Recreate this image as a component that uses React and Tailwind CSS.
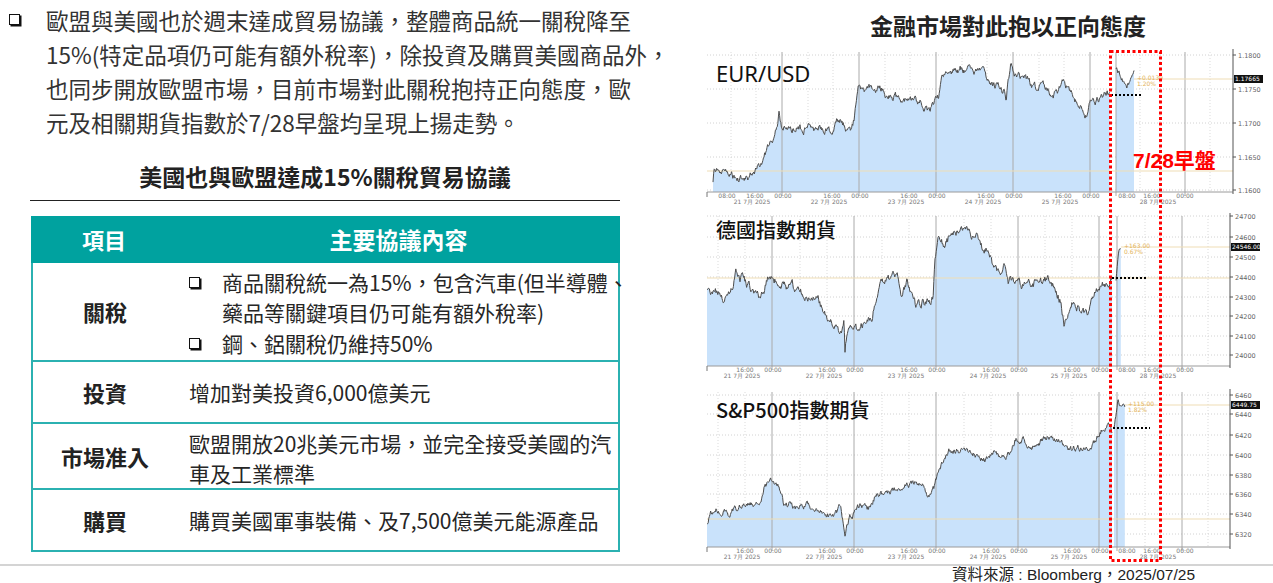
import React from 'react';

// seeded noise so the chart lines look the same on every render
function rng(seed) {
  let a = seed >>> 0;
  return () => {
    a = (a + 0x6d2b79f5) >>> 0;
    let t = a;
    t = Math.imul(t ^ (t >>> 15), t | 1);
    t ^= t + Math.imul(t ^ (t >>> 7), t | 61);
    return ((t ^ (t >>> 14)) >>> 0) / 4294967296;
  };
}

function walk(anchors, seed, amp) {
  const rnd = rng(seed);
  const pts = [];
  let r = 0;
  let j = 0;
  const x0 = anchors[0][0];
  const x1 = anchors[anchors.length - 1][0];
  for (let x = x0; x <= x1 + 0.001; x += 0.6) {
    while (j < anchors.length - 2 && x > anchors[j + 1][0]) j++;
    const [ax, ay] = anchors[j];
    const [bx, by] = anchors[j + 1];
    const t = bx === ax ? 0 : Math.min(1, Math.max(0, (x - ax) / (bx - ax)));
    r = r * 0.7 + (rnd() - 0.5) * amp;
    pts.push([x, ay + (by - ay) * t + r]);
  }
  return pts;
}

function seg(anchors, seed, amp, bottom) {
  const pts = walk(anchors, seed, amp);
  const line = pts.map((p, i) => (i ? 'L' : 'M') + p[0].toFixed(1) + ' ' + p[1].toFixed(1)).join(' ');
  const fill = line + ` L ${pts[pts.length - 1][0].toFixed(1)} ${bottom} L ${pts[0][0].toFixed(1)} ${bottom} Z`;
  return { line, fill };
}

const eurA = [[713,182],[714,168],[722,172],[730,173],[735,178],[745,180],[755,172],[764,157],[771,142],[776,130],[779,113],[782,127],[790,130],[810,128],[825,131],[832,132],[839,118],[845,125],[850,133],[854,120],[859,85],[865,90],[883,88],[887,97],[900,98],[920,103],[929,113],[934,105],[938,100],[942,80],[945,72],[964,70],[982,72],[993,85],[1004,90],[1006,100],[1008,82],[1011,63],[1015,75],[1026,78],[1033,90],[1044,85],[1052,97],[1064,83],[1070,92],[1081,108],[1086,117],[1090,103],[1096,103],[1107,92],[1110,95]];
const eurB = [[1116,70],[1118,72],[1122,80],[1127,84],[1130,81],[1133,78],[1134,74]];

const daxA = [[707,290],[718,293],[722,300],[727,297],[733,283],[736,273],[740,280],[744,278],[751,290],[760,298],[768,280],[771,277],[777,282],[788,288],[792,285],[806,297],[814,297],[817,292],[821,305],[826,315],[836,327],[841,335],[844,317],[845,353],[847,333],[854,333],[861,327],[872,315],[876,300],[879,288],[889,278],[898,277],[901,297],[907,283],[916,307],[923,302],[929,303],[933,295],[935,260],[938,237],[944,245],[953,232],[960,228],[967,232],[973,237],[975,232],[982,247],[989,250],[993,267],[999,273],[1004,265],[1008,283],[1015,280],[1022,285],[1033,283],[1039,280],[1048,280],[1055,288],[1061,303],[1064,323],[1072,300],[1081,313],[1088,315],[1094,297],[1099,288],[1107,282],[1112,278]];
const daxB = [[1116,280],[1118,260],[1119,250],[1121,247]];

const spxA = [[707,523],[711,513],[716,510],[729,513],[737,508],[744,502],[760,505],[764,488],[770,482],[777,483],[782,495],[784,510],[786,505],[799,507],[808,505],[814,513],[821,512],[826,517],[834,515],[841,507],[845,533],[850,518],[861,505],[870,508],[876,495],[890,493],[905,487],[916,482],[923,483],[927,498],[934,490],[938,473],[949,450],[956,450],[967,452],[986,460],[993,452],[1006,460],[1015,440],[1024,440],[1032,450],[1037,443],[1052,435],[1059,442],[1070,450],[1081,447],[1088,450],[1096,440],[1103,428],[1108,425],[1112,432]];
const spxB = [[1114,428],[1118,400],[1121,408],[1123,405],[1125,408]];

const days1 = [782, 859, 936, 1013, 1090];
const days2 = [772, 854, 936, 1018, 1099];

const charts = [
  {
    top: 48, h: 160, plotTop: 52, bottom: 192, axisX: 1233,
    ticks: [['1.1800', 55], ['1.1750', 89], ['1.1700', 123], ['1.1650', 157], ['1.1600', 190]],
    days: [...days1, 1116, 1185],
    dots: [756, 731, 833, 808, 910, 885, 987, 962, 1064, 1039, 1140, 1160, 1210],
    segs: [seg(eurA, 11, 6, 192), seg(eurB, 12, 5, 192)],
    refs: [[171, 707, 1233], [79, 1134, 1233]],
    price: [79, '1.17665'], chg: [1137, 79, '+0.0139', '1.20%'],
    mark: [1111, 1143, 95], first: true,
  },
  {
    top: 212, h: 170, plotTop: 216, bottom: 366, axisX: 1230,
    ticks: [['24700', 216], ['24600', 237], ['24500', 257], ['24400', 277], ['24300', 297], ['24200', 316], ['24100', 336], ['24000', 355]],
    days: [...days2, 1117, 1182],
    dots: [745, 718, 827, 800, 909, 882, 991, 964, 1072, 1045, 1145, 1160, 1208],
    segs: [seg(daxA, 21, 7, 366), seg(daxB, 22, 4, 366)],
    refs: [[278, 707, 1230], [247, 1121, 1230]],
    price: [247, '24546.00'], chg: [1124, 247, '+163.00', '0.67%'],
    mark: [1112, 1146, 278],
  },
  {
    top: 388, h: 175, plotTop: 392, bottom: 547, axisX: 1230,
    ticks: [['6460', 395], ['6440', 414], ['6420', 435], ['6400', 455], ['6380', 475], ['6360', 494], ['6340', 514], ['6320', 534]],
    days: [...days2, 1117, 1182],
    dots: [745, 718, 827, 800, 909, 882, 991, 964, 1072, 1045, 1145, 1160, 1208],
    segs: [seg(spxA, 31, 5, 547), seg(spxB, 32, 4, 547)],
    refs: [[519, 707, 1230], [405, 1125, 1230]],
    price: [405, '6449.75'], chg: [1128, 405, '+115.00', '1.82%'],
    mark: [1113, 1150, 428],
  },
];

function Chart({ c }) {
  const d5 = c.days.slice(0, 5);
  const f = { fontFamily: 'DejaVu Sans, sans-serif' };
  return (
    <svg width="567" height={c.h} viewBox={`706 ${c.top} 567 ${c.h}`} className="block">
      {c.ticks.map(([t, y]) => (
        <line key={t} x1="707" x2={c.axisX} y1={y} y2={y} stroke="#c6c6c6" strokeWidth="0.8" strokeDasharray="1 2" />
      ))}
      {c.dots.map((x) => (
        <line key={'d' + x} x1={x} x2={x} y1={c.plotTop} y2={c.bottom} stroke="#d2d2d2" strokeWidth="0.8" strokeDasharray="1 2" />
      ))}
      {c.segs.map((s, i) => <path key={'f' + i} d={s.fill} fill="#c9e2fb" />)}
      {c.days.map((x) => (
        <line key={'s' + x} x1={x} x2={x} y1={c.plotTop} y2={c.bottom + 4} stroke="#aaaaaa" strokeWidth="1" />
      ))}
      {c.refs.map((r, i) => (
        <line key={'r' + i} x1={r[1]} x2={r[2]} y1={r[0]} y2={r[0]} stroke="#f0ddb6" strokeWidth="1.2" />
      ))}
      {c.segs.map((s, i) => <path key={'l' + i} d={s.line} fill="none" stroke="#4d4d4d" strokeWidth="1" />)}
      <line x1="707" x2={c.axisX} y1={c.bottom} y2={c.bottom} stroke="#9a9a9a" />
      <line x1="707" x2="707" y1={c.bottom} y2={c.bottom + 5} stroke="#777" />
      <line x1={c.axisX} x2={c.axisX} y1={c.plotTop - 3} y2={c.bottom + 2} stroke="#555" />
      {c.ticks.map(([t, y]) => (
        <g key={'t' + t}>
          <line x1={c.axisX} x2={c.axisX + 3} y1={y} y2={y} stroke="#555" />
          <text x={c.axisX + 5} y={y + 2.5} fontSize="6.5" fill="#666" style={f}>{t}</text>
        </g>
      ))}
      <rect x={c.axisX + 1} y={c.price[0] - 4} width="29" height="8" fill="#111" />
      <text x={c.axisX + 2} y={c.price[0] + 2.3} fontSize="6" fill="#fff" style={f}>{c.price[1]}</text>
      <text x={c.chg[0]} y={c.chg[1] + 1} fontSize="6" fill="#e3b35a" style={f}>{c.chg[2]}</text>
      <text x={c.chg[0]} y={c.chg[1] + 7} fontSize="6" fill="#e3b35a" style={f}>{c.chg[3]}</text>
      <line x1={c.mark[0]} x2={c.mark[1]} y1={c.mark[2]} y2={c.mark[2]} stroke="#000" strokeWidth="2" strokeDasharray="2 2" />
      {c.first && (
        <text x="727" y={c.bottom + 6} fontSize="6" fill="#777" textAnchor="middle" style={f}>08:00</text>
      )}
      {d5.map((s, i) => (
        <g key={'x' + s}>
          <text x={s - 27} y={c.bottom + 6} fontSize="6" fill="#777" textAnchor="middle" style={f}>16:00</text>
          <text x={s + 1} y={c.bottom + 6} fontSize="6" fill="#777" textAnchor="middle" style={f}>00:00</text>
          <text x={s - 30} y={c.bottom + 12} fontSize="6" fill="#777" textAnchor="middle" style={f}>{`${21 + i} 7月 2025`}</text>
        </g>
      ))}
      <text x="1127" y={c.bottom + 6} fontSize="6" fill="#777" textAnchor="middle" style={f}>08:00</text>
      <text x="1152" y={c.bottom + 6} fontSize="6" fill="#777" textAnchor="middle" style={f}>16:00</text>
      <text x="1185" y={c.bottom + 6} fontSize="6" fill="#777" textAnchor="middle" style={f}>00:00</text>
      <text x="1158" y={c.bottom + 12} fontSize="6" fill="#777" textAnchor="middle" style={f}>28 7月 2025</text>
    </svg>
  );
}

// the shadowed square bullet
const Box = () => (
  <span className="block w-[11px] h-[11px] border border-[#111] bg-white shadow-[1.5px_1.5px_0_0_#111]" />
);

const rowCls = 'flex border-b-2 border-[#2bb1b1]';
const labelCls = 'w-[144px] shrink-0 flex items-center justify-center text-[22px] font-bold text-[#222]';
const bodyCls = 'flex-1 pl-[12px] text-[21px] leading-[30px] text-[#262626] whitespace-nowrap';

export default function App() {
  return (
    <div className="w-[1273px] h-[583px] bg-white overflow-hidden relative flex flex-col font-['Noto_Sans_CJK_TC','Noto_Sans',sans-serif]">
      <div className="flex h-[564px]">
        {/* left: text + table */}
        <div className="w-[706px] shrink-0">
          <div className="flex pt-[3px]">
            <div className="w-[46px] shrink-0 pl-[9px] pt-[11px]">
              <Box />
            </div>
            <p className="text-[22.5px] leading-[34px] text-[#333] whitespace-nowrap">
              歐盟與美國也於週末達成貿易協議，整體商品統一關稅降至
              <br />
              15%(特定品項仍可能有額外稅率)，除投資及購買美國商品外，
              <br />
              也同步開放歐盟市場，目前市場對此關稅抱持正向態度，歐
              <br />
              元及相關期貨指數於7/28早盤均呈現上揚走勢。
            </p>
          </div>
          <h2 className="mt-[22px] ml-[30px] w-[590px] text-center text-[23px] leading-[30px] font-bold text-[#222]">
            美國也與歐盟達成15%關稅貿易協議
          </h2>
          <div className="ml-[30px] w-[590px] mt-[9px] h-[1px] bg-[#222]" />
          <div className="ml-[31px] w-[589px] mt-[15px] border-x-2 border-[#2bb1b1]">
            <div className="flex h-[47px] bg-[#00a29f] -mx-[2px] text-white text-[22px] font-bold items-center">
              <div className="w-[146px] text-center">項目</div>
              <div className="flex-1 text-center text-[23px]">主要協議內容</div>
            </div>
            <div className={rowCls + ' h-[99px]'}>
              <div className={labelCls}>關稅</div>
              <div className={bodyCls + ' pt-[4px]'}>
                <div className="flex items-center">
                  <span className="w-[33px] shrink-0"><Box /></span>
                  <span>商品關稅統一為15%，包含汽車(但半導體、</span>
                </div>
                <div className="pl-[33px]">藥品等關鍵項目仍可能有額外稅率)</div>
                <div className="flex items-center pt-[1px]">
                  <span className="w-[33px] shrink-0"><Box /></span>
                  <span>鋼、鋁關稅仍維持50%</span>
                </div>
              </div>
            </div>
            <div className={rowCls + ' h-[62px]'}>
              <div className={labelCls}>投資</div>
              <div className={bodyCls + ' flex items-center'}>增加對美投資6,000億美元</div>
            </div>
            <div className={rowCls + ' h-[66px]'}>
              <div className={labelCls}>市場准入</div>
              <div className={bodyCls + ' pt-[4px]'}>
                歐盟開放20兆美元市場，並完全接受美國的汽
                <br />
                車及工業標準
              </div>
            </div>
            <div className={rowCls + ' h-[62px]'}>
              <div className={labelCls}>購買</div>
              <div className={bodyCls + ' flex items-center'}>購買美國軍事裝備、及7,500億美元能源產品</div>
            </div>
          </div>
        </div>

        {/* right: charts */}
        <div className="flex-1 flex flex-col">
          <h2 className="mt-[10px] h-[30px] pl-[37px] text-center text-[23px] leading-[30px] font-bold text-[#222]">
            金融市場對此抱以正向態度
          </h2>
          <div className="relative mt-[8px] h-[160px]">
            <Chart c={charts[0]} />
            <div className="absolute left-[10px] top-[12px] text-[22px] leading-[26px] text-[#111] font-['Noto_Sans',sans-serif]">
              EUR/USD
            </div>
          </div>
          <div className="relative mt-[4px] h-[170px]">
            <Chart c={charts[1]} />
            <div className="absolute left-[10px] top-[5px] text-[20px] leading-[26px] font-medium text-[#111]">
              德國指數期貨
            </div>
          </div>
          <div className="relative mt-[6px] h-[175px]">
            <Chart c={charts[2]} />
            <div className="absolute left-[10px] top-[9px] text-[20px] leading-[26px] font-medium text-[#111]">
              S&amp;P500指數期貨
            </div>
          </div>
        </div>
      </div>

      <div className="h-[2px] bg-[#d4d4d4]" />
      <div className="h-[17px] flex items-center justify-end pr-[78px] text-[15.5px] leading-[16px] text-[#222] font-['Liberation_Sans','Noto_Sans_CJK_TC',sans-serif]">
        資料來源 : Bloomberg，2025/07/25
      </div>

      {/* 7/28 highlight box over the three charts */}
      <svg className="absolute left-[1109px] top-[50px]" width="53" height="512">
        <rect x="1.5" y="1.5" width="50" height="509" fill="none" stroke="#ff0000" strokeWidth="3" strokeDasharray="3 2.5" />
      </svg>
      <div className="absolute left-[1133px] top-[148px] text-[21px] leading-[26px] font-bold text-[#ff0000] font-['Liberation_Sans','Noto_Sans_CJK_TC',sans-serif]">
        7/28早盤
      </div>
    </div>
  );
}
